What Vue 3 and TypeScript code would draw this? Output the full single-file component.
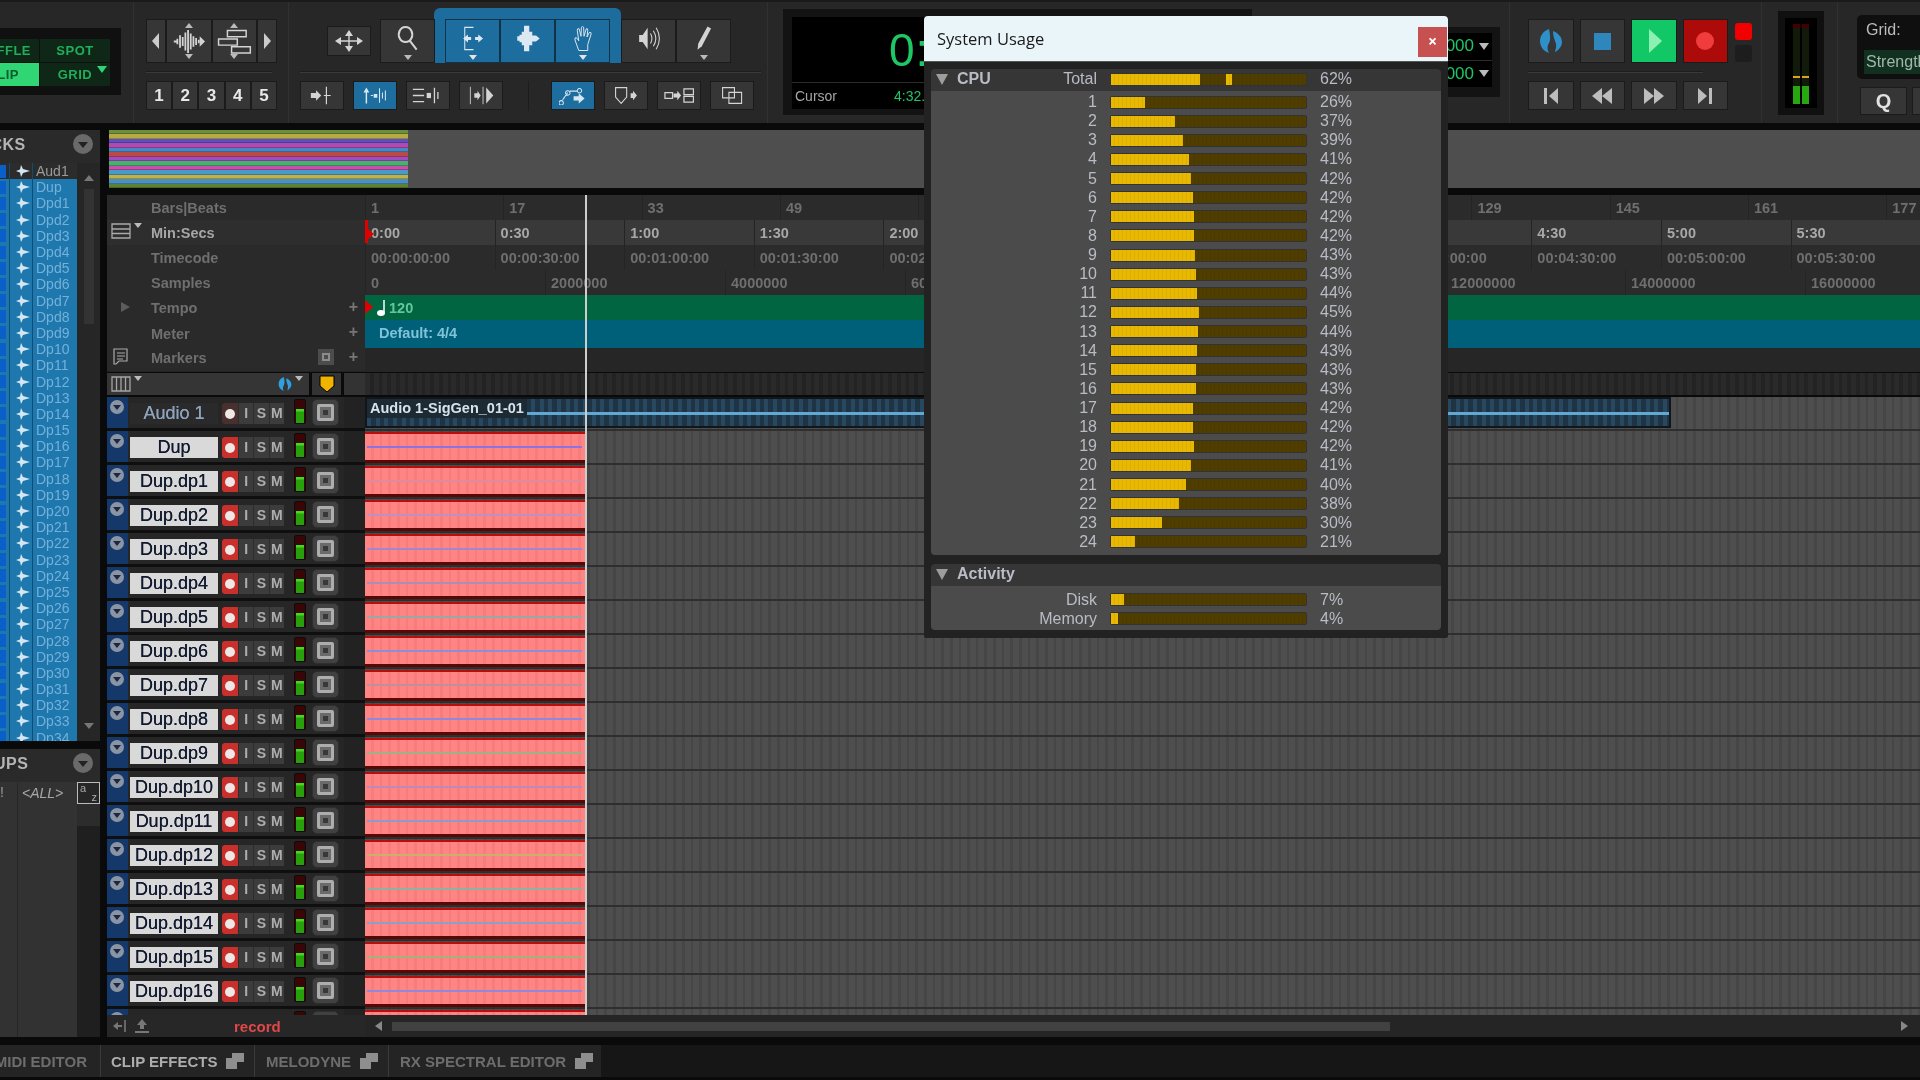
<script setup lang="ts">
import { h } from 'vue'
import type { FunctionalComponent } from 'vue'

type IconDef = { w: number; h: number; f?: string; s?: string; sw?: number }

// toolbar glyphs, fill path + stroke path
const icons: Record<string, IconDef> = {
  cross: { w: 30, h: 24, f: 'M1 12l6-4v8zM29 12l-6-4v8zM15 1l-4 6h8zM15 23l-4-6h8z', s: 'M5 12H25M15 5V19', sw: 1.4 },
  mag: { w: 30, h: 34, s: 'M12 2.500a8.500 9.500 0 1 0 .01 0M17.500 20l8.500 11', sw: 2.6 },
  trim: { w: 32, h: 34, f: 'M4 17l6-5v3h4v4h-4v3zM29 17l-6-5v3h-4v4h4v3z', s: 'M17 3H6V31H17', sw: 1.3 },
  grab: { w: 34, h: 36, f: 'M12 1h7v8h4v5h5l5 4-5 4h-5v5h-4v8h-7v-8H9v-4H6v-2H3v-6h3v-2h3V9h3z' },
  hand: { w: 28, h: 36, s: 'M9 34L4 20Q3 16 6 17L9 21 7 7Q7 4 9.500 5L12 15 12.500 3Q14 1 15.500 3L16 15 19 5Q21 4 21 7L20 16 23 10Q26 9 25.500 12L21 26V34Z', sw: 1.3 },
  speaker: { w: 32, h: 38, f: 'M3 14h5l7-10v30l-7-10H3z', s: 'M19 12q4 7 0 14M23 8q7 11 0 22M27 4q9 15 0 30', sw: 1.5 },
  pencil: { w: 26, h: 38, f: 'M19 2l5 3-13 25-6 5 1-9z' },
  wave: { w: 38, h: 28, f: 'M31 8l6 6-6 6z', s: 'M2 14h3M6 11v6M9 7v14M12 9v10M15 4v20M18 1v26M21 5v18M24 8v12M27 10v8M30 12v4', sw: 2 },
  clips: { w: 34, h: 24, s: 'M10 1.500h18v6H10zM1.500 9.500h18v6H1.500zM14 17h18v6H14z', sw: 1.4 },
  arrowIn: { w: 28, h: 22, f: 'M1 8h6V5l6 6-6 6v-3H1z', s: 'M19 1v20M16 11h8', sw: 1.4 },
  tabNudge: { w: 36, h: 26, f: 'M5 24V9H2l4-7 4 7H7v15zM16 11h5v5h-5z', s: 'M12 13h3M24 3v20M28 9v8M32 6v14', sw: 1.4 },
  tabLines: { w: 36, h: 22, f: 'M17 8h5v6h-5z', s: 'M1 4h13M1 11h13M1 18h13M26 2v18M30 7v8', sw: 1.5 },
  tabEnd: { w: 34, h: 24, f: 'M8 9h4v-3l4 6-4 6v-3H8zM23 2l9 10-9 10z', s: 'M3 1v22M19 1v22', sw: 1.1 },
  route: { w: 38, h: 26, f: 'M20 14h7v-4l8 7-8 7v-4h-7z', s: 'M3 20a3 3 0 1 0 .01 0M5 19L12 9M12 6.500a3 3 0 1 0 .01 0M15 7h10M28 3.500a3 3 0 1 0 .01 0', sw: 1.4 },
  marker: { w: 30, h: 24, f: 'M21 9h3V6l5 6-5 6v-3h-3z', s: 'M2 2h14v12l-7 8-7-8z', sw: 1.4 },
  link: { w: 32, h: 20, f: 'M10 8h4V5l4 5-4 5v-3h-4z', s: 'M1 7h8v6H1zM21 3h10v6H21zM21 11h10v6H21z', sw: 1.3 },
  frames: { w: 28, h: 24, s: 'M2 2h15v13H2zM10 8h16v14H10z', sw: 1.4 },
  prev: { w: 16, h: 18, f: 'M6 9l9-8v16zM1 1h3v16H1z' },
  rew: { w: 22, h: 18, f: 'M1 9l10-8v16zM11 9l10-8v16z' },
  ffw: { w: 22, h: 18, f: 'M1 1l10 8-10 8zM11 1l10 8-10 8z' },
  next: { w: 16, h: 18, f: 'M1 1l9 8-9 8zM12 1h3v16h-3z' },
  online: { w: 24, h: 26, f: 'M10 1C4 3 1 8 1 13s3 10 9 12c-2-3-2-7 0-10 2-3 1-9 0-14zM14 3c5 2 9 6 9 11 0 4-3 8-7 10 1-4 2-7 0-11-1-3-2-6-2-10z' },
  listIcon: { w: 20, h: 16, s: 'M1 1h18v14H1zM1 6h18M1 10.500h18', sw: 1.3 },
  colsIcon: { w: 20, h: 16, s: 'M1 1h18v14H1zM5.500 1v14M10 1v14M14.500 1v14', sw: 1.3 },
  comment: { w: 16, h: 18, s: 'M1 1h13v12H6l-3 3H1zM4 5h8M4 8h8M4 11h6', sw: 1.2 },
  tabStack: { w: 18, h: 16, f: 'M6 0h12v9H6zM0 5h11v11H0z' },
  inEnd: { w: 16, h: 14, f: 'M1 7l5-4v3h4v2H6v3z', s: 'M13 1v12', sw: 1.6 },
  upload: { w: 14, h: 14, f: 'M7 0l5 6H9v4H5V6H2zM0 12h14v2H0z' },
  spike: { w: 14, h: 14, f: 'M0 7l4-1.500L5 1l2 4 7 2-7 2-2 4-1-4.500z' },
}

const Icon: FunctionalComponent<{ name: string }> = (props) => {
  const ic = icons[props.name]
  return h('svg', { width: ic.w, height: ic.h, viewBox: `0 0 ${ic.w} ${ic.h}`, style: 'display:block' }, [
    ic.f ? h('path', { d: ic.f, fill: 'currentColor' }) : null,
    ic.s ? h('path', { d: ic.s, fill: 'none', stroke: 'currentColor', 'stroke-width': ic.sw ?? 1.4 }) : null,
  ])
}

const overviewBands = ['#6c8e3f', '#b8aa40', '#5b4fc4', '#b04ab0', '#4a86c2', '#b84a48', '#a24acb', '#4ab06e', '#c650aa', '#4a9ac8', '#c2b242', '#4a90c2', '#5d8234']

const listNames: string[] = ['Aud1', 'Dup']
for (let i = 1; i <= 34; i++) listNames.push(i < 10 ? `Dpd${i}` : `Dp${i}`)

const barTicks = Array.from({ length: 12 }, (_, i) => 1 + i * 16)
const minTicks = ['0:00', '0:30', '1:00', '1:30', '2:00', '2:30', '3:00', '3:30', '4:00', '4:30', '5:00', '5:30']
const tcTicks = minTicks.map((m) => {
  const [a, b] = m.split(':')
  return `00:0${a}:${b}:00`
})
const sampleTicks = Array.from({ length: 9 }, (_, i) => String(i * 2000000))

const laneColors = ['#a9b878', '#8f72e2', '#e08aa0', '#c090c0', '#a088d0', '#b08ab8', '#98a8a8', '#8a90d8', '#c09098', '#9088d8', '#a0b088', '#c088b8', '#8a9cc8', '#c8b070', '#90b0a0', '#8aa0c8', '#a8b078', '#9088d8']
const rows = ['Audio 1', 'Dup', ...Array.from({ length: 17 }, (_, i) => `Dup.dp${i + 1}`)]

const cpuRows: [string, number, string][] = [
  ['1', 34, '26%'], ['2', 64, '37%'], ['3', 72, '39%'], ['4', 78, '41%'], ['5', 80, '42%'], ['6', 82, '42%'],
  ['7', 83, '42%'], ['8', 83, '42%'], ['9', 84, '43%'], ['10', 85, '43%'], ['11', 86, '44%'], ['12', 88, '45%'],
  ['13', 87, '44%'], ['14', 86, '43%'], ['15', 85, '43%'], ['16', 85, '43%'], ['17', 82, '42%'], ['18', 82, '42%'],
  ['19', 83, '42%'], ['20', 80, '41%'], ['21', 75, '40%'], ['22', 68, '38%'], ['23', 51, '30%'], ['24', 24, '21%'],
]
const activityRows: [string, number, string][] = [['Disk', 13, '7%'], ['Memory', 7, '4%']]
</script>

<template>
  <div class="app">
    <header class="toolbar">
      <section class="tb-mode">
        <div class="modes">
          <div class="mode m-left"><span>SHUFFLE</span></div>
          <div class="mode">SPOT</div>
          <div class="mode m-left on"><span>SLIP</span></div>
          <div class="mode">GRID<i class="mode-tri"></i></div>
        </div>
      </section>

      <section class="tb-zoom">
        <div class="btn-group zoom-group">
          <div class="btn w19"><i class="tri-left"></i></div>
          <div class="btn w45 tall"><i class="mini up"></i><Icon name="wave" /><i class="mini"></i></div>
          <div class="btn w45 tall"><i class="mini up"></i><Icon name="clips" /><i class="mini"></i></div>
          <div class="btn w19"><i class="tri-right"></i></div>
        </div>
        <div class="hr"></div>
        <div class="btn-group num-group">
          <div v-for="n in 5" :key="n" class="btn num">{{ n }}</div>
        </div>
      </section>

      <section class="tb-tools">
        <div class="tools-top">
          <div class="btn cross-btn"><Icon name="cross" /></div>
          <div class="btn tool tool-zoom"><Icon name="mag" /><i class="mini low"></i></div>
          <div class="tool-tab">
            <div class="btn tool blue"><Icon name="trim" /><i class="mini low lite"></i></div>
            <div class="btn tool blue"><Icon name="grab" /></div>
            <div class="btn tool blue"><Icon name="hand" /><i class="mini low lite"></i></div>
          </div>
          <div class="btn tool"><Icon name="speaker" /></div>
          <div class="btn tool"><Icon name="pencil" /><i class="mini low"></i></div>
        </div>
        <div class="hr tools-hr"></div>
        <div class="tools-bottom">
          <div class="btn sm"><Icon name="arrowIn" /></div>
          <div class="btn sm active"><Icon name="tabNudge" /></div>
          <div class="btn sm"><Icon name="tabLines" /></div>
          <div class="btn sm"><Icon name="tabEnd" /></div>
          <div class="vsep"></div>
          <div class="btn sm active"><Icon name="route" /></div>
          <div class="btn sm"><Icon name="marker" /></div>
          <div class="btn sm"><Icon name="link" /></div>
          <div class="btn sm"><Icon name="frames" /></div>
        </div>
      </section>

      <section class="tb-counter">
        <div class="counter">
          <div class="counter-main">0:56.000</div>
          <div class="counter-line"></div>
          <div class="counter-sub"><span>Cursor</span><b>4:32.000</b></div>
        </div>
        <div class="selection">
          <div class="sel-row">000<i class="mode-tri gray"></i></div>
          <div class="sel-line"></div>
          <div class="sel-row">000<i class="mode-tri gray"></i></div>
        </div>
      </section>

      <section class="tb-transport">
        <div class="transport-top">
          <div class="btn trans"><span class="online"><Icon name="online" /></span></div>
          <div class="btn trans"><i class="stop"></i></div>
          <div class="btn trans play"><i class="play-tri"></i></div>
          <div class="btn trans rec"><i class="rec-dot"></i></div>
          <div class="leds"><i class="led red"></i><i class="led"></i></div>
        </div>
        <div class="hr trans-hr"></div>
        <div class="transport-bottom">
          <div class="btn trans2"><Icon name="prev" /></div>
          <div class="btn trans2"><Icon name="rew" /></div>
          <div class="btn trans2"><Icon name="ffw" /></div>
          <div class="btn trans2"><Icon name="next" /></div>
        </div>
      </section>

      <section class="tb-meter">
        <div class="master">
          <div class="master-in">
            <i class="mbar"></i><i class="mbar"></i>
          </div>
        </div>
      </section>

      <section class="tb-grid">
        <div class="grid-box">
          <div class="grid-label">Grid:</div>
          <div class="grid-val">Strength</div>
        </div>
        <div class="grid-btns">
          <div class="btn q">Q</div>
          <div class="btn q"></div>
        </div>
      </section>
    </header>

    <main class="main">
      <aside class="side">
        <div class="side-head"><span class="clip-end">TRACKS</span><i class="round-menu"></i></div>
        <div class="track-list">
          <div class="list-names">
            <div v-for="(n, i) in listNames" :key="n" class="list-row" :class="{ off: i === 0 }">
              <i class="list-box"></i>
              <span class="list-arrow"><Icon name="spike" /></span>
              <span class="list-name">{{ n }}</span>
            </div>
          </div>
          <div class="list-scroll">
            <i class="sc-up"></i>
            <div class="sc-thumb"></div>
            <i class="sc-down"></i>
          </div>
        </div>
        <div class="side-head groups"><span class="clip-end">GROUPS</span><i class="round-menu"></i></div>
        <div class="group-list">
          <div class="group-main"><span class="group-id">!</span><span class="group-all">&lt;ALL&gt;</span></div>
          <div class="group-col">
            <div class="az"><span>a</span><span>z</span></div>
            <div class="group-slot"></div>
          </div>
        </div>
      </aside>

      <div class="edit">
        <div class="overview">
          <div class="bands">
            <i v-for="(c, i) in overviewBands" :key="i" :style="{ background: c }"></i>
          </div>
        </div>

        <div class="ruler">
          <div class="r-row">
            <div class="r-label"><span class="r-text">Bars|Beats</span></div>
            <div class="r-cells bars">
              <span v-for="t in barTicks" :key="t">{{ t }}</span>
            </div>
          </div>
          <div class="r-row main-ruler">
            <div class="r-label">
              <span class="r-icon"><Icon name="listIcon" /><i class="mode-tri gray small"></i></span>
              <span class="r-text">Min:Secs</span>
            </div>
            <div class="r-cells mins">
              <span v-for="t in minTicks" :key="t">{{ t }}</span>
              <i class="start-flag"></i>
            </div>
          </div>
          <div class="r-row">
            <div class="r-label"><span class="r-text">Timecode</span></div>
            <div class="r-cells mins">
              <span v-for="t in tcTicks" :key="t">{{ t }}</span>
            </div>
          </div>
          <div class="r-row">
            <div class="r-label"><span class="r-text">Samples</span></div>
            <div class="r-cells samples">
              <span v-for="t in sampleTicks" :key="t">{{ t }}</span>
            </div>
          </div>
          <div class="r-row">
            <div class="r-label">
              <i class="r-tri"></i><span class="r-text">Tempo</span><b class="r-plus">+</b>
            </div>
            <div class="r-strip tempo">
              <i class="tempo-flag"></i>
              <svg width="12" height="18" viewBox="0 0 12 18"><path d="M8 1v12" stroke="#fff" stroke-width="1.500" /><ellipse cx="5" cy="14" rx="4" ry="3" fill="#fff" /></svg>
              <span>120</span>
            </div>
          </div>
          <div class="r-row">
            <div class="r-label"><span class="r-text">Meter</span><b class="r-plus">+</b></div>
            <div class="r-strip meter-strip"><span>Default: 4/4</span></div>
          </div>
          <div class="r-row">
            <div class="r-label">
              <span class="r-icon comment"><Icon name="comment" /></span>
              <span class="r-text">Markers</span>
              <i class="r-square"></i>
              <b class="r-plus">+</b>
            </div>
            <div class="r-blank"></div>
          </div>
        </div>

        <div class="lanes-head">
          <div class="lh-left">
            <div class="lh-main">
              <span class="lh-icon"><Icon name="colsIcon" /><i class="mode-tri gray small"></i></span>
              <span class="lh-online"><Icon name="online" /><i class="mode-tri gray small"></i></span>
            </div>
            <div class="lh-cell"><svg width="16" height="18" viewBox="0 0 16 18"><path d="M1 1h14v10l-7 6-7-6z" fill="#f0b400" stroke="#000" /></svg></div>
            <div class="lh-cell last"></div>
          </div>
          <div class="lh-right"></div>
        </div>

        <div class="tracks">
          <div v-for="(name, i) in rows" :key="name" class="track">
            <div class="t-head">
              <div class="t-fold"><i class="chev"></i></div>
              <div class="t-name" :class="{ dark: i === 0 }">{{ name }}</div>
              <div class="t-btns">
                <span class="t-rec" :class="{ armed: i > 0 }"><i></i></span>
                <span>I</span><span>S</span><span>M</span>
              </div>
              <div class="t-meter"><i></i></div>
              <div class="t-square"><i></i></div>
              <div class="t-slot"></div>
            </div>
            <div class="t-lane">
              <div v-if="i === 0" class="audio-clip">
                <span class="clip-name">Audio 1-SigGen_01-01</span>
              </div>
              <div v-else class="rec-clip"><i :style="{ background: laneColors[i] }"></i></div>
            </div>
          </div>
        </div>

        <div class="bottom">
          <div class="b-left">
            <span class="b-ic"><Icon name="inEnd" /></span>
            <span class="b-ic up"><Icon name="upload" /></span>
            <span class="b-record">record</span>
          </div>
          <div class="b-scroll">
            <i class="tri-left dim"></i>
            <div class="b-track"><div class="b-thumb"></div></div>
            <i class="tri-right dim"></i>
          </div>
        </div>

        <div class="playhead"></div>
      </div>
    </main>

    <footer class="tabs">
      <div class="tab first"><span>MIDI EDITOR</span></div>
      <div class="tab clip-tab"><span>CLIP EFFECTS</span><Icon name="tabStack" /></div>
      <div class="tab mel"><span>MELODYNE</span><Icon name="tabStack" /></div>
      <div class="tab rx"><span>RX SPECTRAL EDITOR</span><Icon name="tabStack" /></div>
    </footer>

    <div class="usage-window">
      <div class="win-title">
        <span>System Usage</span>
        <div class="win-close">×</div>
      </div>
      <div class="win-body">
        <div class="usage-sec">
          <div class="sec-head">
            <i class="sec-tri"></i><b class="sec-name">CPU</b>
            <span class="u-label total">Total</span>
            <div class="u-bar"><i :style="{ width: '89px' }"></i><i class="peak"></i></div>
            <span class="u-val">62%</span>
          </div>
          <div class="sec-body">
            <div v-for="r in cpuRows" :key="r[0]" class="u-row">
              <span class="u-label">{{ r[0] }}</span>
              <div class="u-bar"><i :style="{ width: r[1] + 'px' }"></i></div>
              <span class="u-val">{{ r[2] }}</span>
            </div>
          </div>
        </div>
        <div class="usage-sec">
          <div class="sec-head"><i class="sec-tri"></i><b class="sec-name">Activity</b></div>
          <div class="sec-body small">
            <div v-for="r in activityRows" :key="r[0]" class="u-row">
              <span class="u-label">{{ r[0] }}</span>
              <div class="u-bar"><i :style="{ width: r[1] + 'px' }"></i></div>
              <span class="u-val">{{ r[2] }}</span>
            </div>
          </div>
        </div>
      </div>
    </div>
  </div>
</template>

<style>
html,
body {
  margin: 0;
  background: #0a0a0a;
}
</style>

<style scoped>
.app {
  position: relative;
  width: 1920px;
  height: 1080px;
  overflow: hidden;
  background: #0a0a0a;
  display: flex;
  flex-direction: column;
  font-family: "Liberation Sans", Arial, sans-serif;
  color: #aaa;
  /* the source capture is a soft upscale */
  filter: blur(0.45px);
}

/* toolbar */
.toolbar {
  height: 123px;
  flex: none;
  display: flex;
  background: #272727;
  border-top: 2px solid #1a1a1a;
  box-sizing: border-box;
}
.toolbar section {
  box-sizing: border-box;
  height: 121px;
  border-right: 1px solid #313131;
  flex: none;
}
.btn {
  box-sizing: border-box;
  background: #363636;
  border: 1px solid #1b1b1b;
  color: #d4d4d4;
  display: flex;
  align-items: center;
  justify-content: center;
}
.hr {
  height: 1px;
  background: #3a3a3a;
  border-top: 1px solid #1d1d1d;
}
.mini {
  width: 0;
  height: 0;
  border-left: 4px solid transparent;
  border-right: 4px solid transparent;
  border-top: 5px solid #bbb;
}
.mini.up {
  border-top: 0;
  border-bottom: 5px solid #bbb;
}
.mini.low {
  position: absolute;
  bottom: 2px;
  left: 50%;
  margin-left: -4px;
}
.mini.lite {
  border-top-color: #e4e4e4;
}

.tb-mode {
  width: 134px;
  padding-top: 26px;
}
.modes {
  width: 121px;
  height: 67px;
  box-sizing: border-box;
  background: #101010;
  padding: 11px 11px 10px 0;
  display: grid;
  grid-template-columns: 39px 70px;
  grid-template-rows: 23px 23px;
  gap: 1px;
}
.mode {
  background: #0e2716;
  color: #1fae59;
  font-size: 13px;
  font-weight: 700;
  letter-spacing: 0.5px;
  display: flex;
  align-items: center;
  justify-content: center;
  position: relative;
  overflow: hidden;
}
.m-left {
  justify-content: flex-end;
  padding-right: 8px;
  white-space: nowrap;
}
.mode.on {
  background: #2fd673;
  color: #0e5a2a;
  padding-right: 20px;
}
.mode-tri {
  position: absolute;
  right: 3px;
  top: 3px;
  width: 0;
  height: 0;
  border-left: 5px solid transparent;
  border-right: 5px solid transparent;
  border-top: 7px solid #2fd673;
}
.mode-tri.gray {
  position: static;
  display: inline-block;
  margin-left: 5px;
  border-top-color: #bbb;
}
.mode-tri.small {
  border-left-width: 4px;
  border-right-width: 4px;
  border-top-width: 5px;
  margin: 0 0 0 3px;
}

.tb-zoom {
  width: 155px;
  padding: 17px 12px 0;
}
.btn-group {
  display: flex;
  width: 131px;
}
.zoom-group {
  height: 44px;
}
.w19 {
  width: 20px;
}
.w45 {
  width: 46px;
}
.tall {
  flex-direction: column;
  justify-content: space-between;
  padding: 3px 0;
}
.tall :deep(svg) {
  height: 25px;
  width: auto;
}
.tri-left,
.tri-right {
  width: 0;
  height: 0;
  border-top: 8px solid transparent;
  border-bottom: 8px solid transparent;
}
.tri-left {
  border-right: 7px solid #ccc;
}
.tri-right {
  border-left: 7px solid #ccc;
}
.tri-left.dim,
.tri-right.dim {
  border-top-width: 5px;
  border-bottom-width: 5px;
  border-left-color: #888;
  border-right-color: #888;
}
.zoom-group + .hr {
  margin: 8px 4px 8px 0;
}
.num-group {
  height: 29px;
}
.num {
  flex: 1;
  font-size: 17px;
  font-weight: 700;
  color: #e8e8e8;
}

.tb-tools {
  width: 479px;
  padding-top: 6px;
}
.tools-top {
  display: flex;
  align-items: flex-end;
  height: 55px;
  padding-left: 38px;
}
.cross-btn {
  width: 44px;
  height: 30px;
  margin: 0 0 7px;
}
.tool {
  position: relative;
  width: 55px;
  height: 44px;
  padding-bottom: 6px;
}
.tool :deep(svg) {
  height: 27px;
  width: auto;
}
.tool-zoom {
  margin-left: 9px;
}
.tool-tab {
  width: 187px;
  height: 55px;
  box-sizing: border-box;
  background: #1c6d9e;
  border-radius: 6px 6px 0 0;
  padding: 11px 11px 0;
  display: flex;
  margin-left: -1px;
}
.tool-tab .tool {
  height: 44px;
  width: 55px;
  flex: 1;
}
.btn.blue {
  background: #1d6d9f;
  border-color: #123247;
  color: #dce9f2;
}
.tools-hr {
  margin: 8px 6px 8px 11px;
}
.tools-bottom {
  display: flex;
  gap: 9px;
  padding-left: 11px;
  height: 29px;
}
.sm {
  width: 44px;
  height: 29px;
}
.sm :deep(svg) {
  height: 19px;
  width: auto;
}
.btn.active {
  background: #1d6d9f;
  border-color: #1b1b1b;
  color: #d6e7f2;
}
.vsep {
  width: 1px;
  background: #1c1c1c;
  margin: 0 13px 0 16px;
  height: 30px;
}

.tb-counter {
  width: 742px;
  display: flex;
  align-items: flex-start;
  padding: 7px 0 0 15px;
  gap: 18px;
}
.counter {
  width: 469px;
  height: 106px;
  box-sizing: border-box;
  background: #131313;
  padding: 8px 9px;
  position: relative;
}
.counter-main {
  height: 65px;
  background: #000;
  color: #1ec765;
  font-size: 46px;
  line-height: 66px;
  padding-left: 97px;
  letter-spacing: 1px;
  white-space: nowrap;
}
.counter-line {
  height: 1px;
  background: #2c2c2c;
}
.counter-sub {
  height: 26px;
  background: #000;
  display: flex;
  align-items: center;
  font-size: 14px;
  padding-left: 3px;
  color: #a6a6a6;
}
.counter-sub b {
  font-weight: 400;
  color: #1ec765;
  margin-left: 57px;
}
.selection {
  width: 230px;
  height: 70px;
  margin-top: 18px;
  background: #131313;
  box-sizing: border-box;
  padding: 6px 8px 10px;
  display: flex;
  flex-direction: column;
}
.sel-row {
  flex: 1;
  background: #000;
  color: #1ec765;
  font-size: 17px;
  display: flex;
  align-items: center;
  justify-content: flex-end;
  padding-right: 3px;
}
.sel-line {
  height: 1px;
  background: #2c2c2c;
}

.tb-transport {
  width: 252px;
  padding: 17px 0 0 18px;
}
.transport-top,
.transport-bottom {
  display: flex;
  gap: 6px;
}
.trans {
  width: 45.5px;
  height: 44px;
}
.online {
  color: #2f8fc9;
  display: block;
}
.stop {
  width: 17px;
  height: 17px;
  background: #2f86bd;
}
.btn.play {
  background: #12c866;
  border-color: #1b1b1b;
}
.play-tri {
  width: 0;
  height: 0;
  border-top: 12px solid transparent;
  border-bottom: 12px solid transparent;
  border-left: 13px solid #8cf0b4;
  margin-left: 3px;
}
.btn.rec {
  background: #ad0a0a;
}
.rec-dot {
  width: 18px;
  height: 18px;
  border-radius: 50%;
  background: #f03c3c;
}
.leds {
  display: flex;
  flex-direction: column;
  gap: 5px;
  padding-top: 4px;
  margin-left: 1px;
}
.led {
  width: 17px;
  height: 17px;
  border-radius: 3px;
  background: #1d1d1d;
}
.led.red {
  background: #f20000;
}
.trans-hr {
  margin: 8px 58px 8px 0;
}
.trans2 {
  width: 45.5px;
  height: 29px;
  color: #bdbdbd;
}

.tb-meter {
  width: 76px;
  padding: 9px 0 0 16px;
}
.master {
  width: 46px;
  height: 104px;
  box-sizing: border-box;
  background: #101010;
  padding: 7px;
}
.master-in {
  height: 90px;
  background: #000;
  box-sizing: border-box;
  padding: 6px 8px 4px;
  display: flex;
  gap: 2px;
}
.mbar {
  flex: 1;
  background: linear-gradient(to bottom, #400 0 4px, #121a0a 4px 52px, #e0a020 52px 54px, #121a0a 54px 62px, #28a810 62px);
}

.tb-grid {
  width: 82px;
  border-right: 0 !important;
  padding: 13px 0 0 19px;
}
.grid-box {
  width: 70px;
  height: 64px;
  box-sizing: border-box;
  background: #0f0f0f;
  border-radius: 5px 0 0 5px;
  padding: 5px 0 0 9px;
  overflow: hidden;
  white-space: nowrap;
  font-size: 16px;
}
.grid-label {
  color: #bbb;
  height: 30px;
  line-height: 20px;
}
.grid-val {
  background: #123020;
  color: #9fb8a8;
  margin-left: -2px;
  padding: 3px 0 3px 2px;
}
.grid-btns {
  display: flex;
  gap: 5px;
  margin: 8px 0 0 3px;
  width: 90px;
}
.q {
  flex: none;
  width: 47px;
  height: 28px;
  font-size: 20px;
  font-weight: 700;
  color: #e2e2e2;
}

/* main */
.main {
  flex: none;
  height: 907px;
  margin-top: 7px;
  display: flex;
  gap: 7px;
}
.side {
  width: 100px;
  flex: none;
  display: flex;
  flex-direction: column;
}
.side-head {
  height: 33px;
  flex: none;
  box-sizing: border-box;
  padding-bottom: 3px;
  background: #2a2a2a;
  display: flex;
  align-items: center;
  position: relative;
}
.side-head .clip-end {
  flex: none;
  font-size: 16px;
  font-weight: 700;
  color: #b5b5b5;
  letter-spacing: 0.5px;
  white-space: nowrap;
  margin-left: -44px;
  width: 68px;
  text-align: right;
}
.round-menu {
  position: absolute;
  right: 7px;
  top: 4px;
  width: 20px;
  height: 20px;
  border-radius: 50%;
  background: #6a6a6a;
}
.round-menu::after {
  content: "";
  position: absolute;
  left: 5px;
  top: 8px;
  border-left: 5px solid transparent;
  border-right: 5px solid transparent;
  border-top: 6px solid #222;
}
.track-list {
  height: 578px;
  flex: none;
  display: flex;
  background: #202020;
}
.list-names {
  width: 77px;
  overflow: hidden;
  background: #1e78ae;
}
.list-row {
  height: 16.2px;
  display: flex;
  align-items: center;
  font-size: 14px;
  line-height: 16px;
  color: #74b0d8;
  background: #1e78ae;
}
.list-row.off {
  background: #2c2c2c;
  color: #9a9a9a;
}
.list-box {
  width: 6px;
  height: 13px;
  background: #0860c8;
  flex: none;
}
.list-arrow {
  width: 24px;
  margin-left: 3px;
  padding-left: 6px;
  box-sizing: border-box;
  color: #d3e6f2;
  height: 100%;
  display: flex;
  align-items: center;
  flex: none;
  border-left: 1px solid #0e4d75;
  border-right: 1px solid #0e4d75;
}
.list-name {
  margin-left: 3px;
}
.list-scroll {
  flex: 1;
  background: #262626;
  display: flex;
  flex-direction: column;
  align-items: center;
  padding: 12px 0;
  box-sizing: border-box;
}
.sc-up,
.sc-down {
  width: 0;
  height: 0;
  border-left: 5px solid transparent;
  border-right: 5px solid transparent;
  border-bottom: 6px solid #777;
}
.sc-down {
  border-bottom: 0;
  border-top: 6px solid #777;
  margin-top: auto;
}
.sc-thumb {
  width: 10px;
  height: 135px;
  margin-top: 8px;
  background: #333;
}
.side-head.groups {
  margin-top: 8px;
}
.group-list {
  flex: 1;
  display: flex;
  background: #323232;
  font-size: 14px;
}
.group-main {
  flex: 1;
  padding-top: 1px;
  display: flex;
}
.group-id {
  width: 18px;
  border-right: 1px solid #262626;
  box-sizing: border-box;
  color: #999;
  line-height: 18px;
}
.group-all {
  margin-left: 4px;
  font-style: italic;
  color: #a8a8a8;
  line-height: 20px;
}
.group-col {
  width: 23px;
  background: #1f1f1f;
  display: flex;
  flex-direction: column;
}
.az {
  box-sizing: border-box;
  height: 22px;
  border: 1px solid #bbb;
  background: #262626;
  color: #aaa;
  font-size: 11px;
  line-height: 9px;
  display: flex;
  flex-direction: column;
  padding: 1px 2px;
}
.az span:last-child {
  text-align: right;
}
.group-slot {
  height: 22px;
  background: #2c2c2c;
}

/* edit window */
.edit {
  position: relative;
  flex: 1;
  display: flex;
  flex-direction: column;
  min-width: 0;
}
.overview {
  height: 58px;
  flex: none;
  margin-left: 2px;
  background: #4e4e4e;
}
.bands {
  width: 299px;
  height: 100%;
  display: flex;
  flex-direction: column;
}
.bands i {
  flex: 1;
  border-bottom: 1px solid rgba(0, 0, 0, 0.22);
}
.ruler {
  margin-top: 7px;
  flex: none;
}
.r-row {
  display: grid;
  grid-template-columns: 258px 1fr;
  height: 25px;
  font-size: 14.5px;
  font-weight: 700;
  line-height: 26px;
  color: #6f6f6f;
}
.r-label {
  position: relative;
  background: #2a2a2a;
  border-bottom: 1px solid #232323;
  display: flex;
  align-items: center;
  padding-left: 44px;
  box-sizing: border-box;
}
.r-text {
  white-space: nowrap;
}
.main-ruler {
  color: #a6a6a6;
}
.main-ruler .r-label {
  background: #2e2e2e;
}
.r-icon {
  position: absolute;
  left: 4px;
  top: 3px;
  display: flex;
  color: #aaa;
}
.r-icon.comment {
  left: 6px;
}
.r-tri {
  position: absolute;
  left: 14px;
  top: 7px;
  border-top: 5.500px solid transparent;
  border-bottom: 5.500px solid transparent;
  border-left: 9px solid #5c5c5c;
}
.r-plus {
  position: absolute;
  right: 7px;
  top: -1px;
  font-size: 16px;
  color: #777;
}
.r-square {
  position: absolute;
  left: 211px;
  top: 4px;
  width: 16px;
  height: 16px;
  box-sizing: border-box;
  background: #4c4c4c;
  display: flex;
  align-items: center;
  justify-content: center;
}
.r-square::after {
  content: "";
  width: 8px;
  height: 8px;
  box-sizing: border-box;
  border: 2px solid #8c8c8c;
}
.r-cells {
  display: flex;
  background: #2b2b2b;
  border-bottom: 1px solid #232323;
  overflow: hidden;
  position: relative;
  white-space: nowrap;
}
.r-cells span {
  flex: none;
  padding-left: 5px;
  box-sizing: border-box;
  border-left: 1px solid #242424;
}
.bars span {
  width: 138.3px;
}
.mins span {
  width: 129.6px;
}
.samples span {
  width: 180px;
}
.main-ruler .r-cells {
  background: #393939;
  color: #a8a8a8;
  border-color: #222;
}
.start-flag {
  position: absolute;
  left: 0;
  top: 0;
  width: 3px;
  height: 23px;
  background: #e00000;
}
.start-flag::after {
  content: "";
  position: absolute;
  left: 3px;
  top: 9px;
  border-top: 5px solid transparent;
  border-bottom: 5px solid transparent;
  border-left: 6px solid #e00000;
}
.r-strip {
  display: flex;
  align-items: center;
  position: relative;
  font-size: 14.5px;
}
.tempo {
  background: #006540;
  color: #63c79c;
  padding-left: 11px;
  border-bottom: 1px solid #1f3a2c;
  box-sizing: border-box;
}
.tempo span {
  margin-left: 1px;
}
.tempo-flag {
  position: absolute;
  left: 0;
  top: 5px;
  border-top: 7px solid transparent;
  border-bottom: 7px solid transparent;
  border-left: 8px solid #e00000;
}
.meter-strip {
  background: #005f79;
  color: #7fc3d8;
  padding: 0 0 2px 14px;
  box-sizing: border-box;
}
.r-blank {
  background: #262626;
}
.lanes-head {
  margin-top: 3px;
  height: 22px;
  flex: none;
  display: grid;
  grid-template-columns: 258px 1fr;
}
.lh-left {
  display: flex;
  gap: 3px;
}
.lh-main {
  width: 202px;
  background: #353535;
  display: flex;
  justify-content: space-between;
  align-items: center;
  padding: 0 6px 0 4px;
  box-sizing: border-box;
  color: #a5a5a5;
}
.lh-icon {
  display: flex;
  align-items: flex-start;
}
.lh-online {
  display: flex;
  align-items: flex-start;
  color: #2f9fe0;
}
.lh-online :deep(svg) {
  width: 14px;
  height: 16px;
}
.lh-cell {
  width: 29px;
  background: #333;
  display: flex;
  align-items: center;
  justify-content: center;
}
.lh-cell.last {
  width: 21px;
}
.lh-right {
  background: repeating-linear-gradient(to right, #2a2a2a 0 5px, #232323 5px 8.64px);
}
.tracks {
  margin-top: 2px;
  height: 618px;
  flex: none;
  overflow: hidden;
}
.track {
  height: 34px;
  display: grid;
  grid-template-columns: 258px 1fr;
  background: #0f0f0f;
}
.t-head {
  height: 31px;
  display: flex;
  background: #262626;
}
.t-fold {
  width: 21px;
  flex: none;
  background: #14386a;
  position: relative;
}
.chev {
  position: absolute;
  left: 3px;
  top: 3px;
  width: 14px;
  height: 14px;
  border-radius: 50%;
  background: #8b94a4;
}
.chev::after {
  content: "";
  position: absolute;
  left: 3px;
  top: 5px;
  border-left: 4px solid transparent;
  border-right: 4px solid transparent;
  border-top: 5px solid #1c2840;
}
.t-name {
  width: 88px;
  height: 21px;
  margin: 6px 0 0 2px;
  background: #d9d9d9;
  color: #10192e;
  font-size: 18px;
  line-height: 20px;
  text-align: center;
  white-space: nowrap;
  flex: none;
  overflow: hidden;
  text-shadow: 0 0 0.6px #10192e;
}
.t-name.dark {
  background: #2a2a2a;
  color: #8ea4bd;
  text-shadow: 0 0 0.6px #8ea4bd;
}
.t-btns {
  display: flex;
  width: 62px;
  height: 21px;
  margin: 6px 0 0 4px;
  flex: none;
  font-size: 14px;
  font-weight: 700;
  color: #aeaeae;
  line-height: 20px;
  text-align: center;
}
.t-btns span {
  flex: 1;
  background: #3c3c3c;
  border-left: 1px solid #2c2c2c;
}
.t-btns .t-rec {
  background: #4a2f2f;
  flex: none;
  width: 16px;
  border: 0;
  display: flex;
  align-items: center;
  justify-content: center;
  border-radius: 3px 0 0 3px;
}
.t-rec i {
  width: 10px;
  height: 10px;
  border-radius: 50%;
  background: #efe6e6;
}
.t-btns .t-rec.armed {
  background: #c9302c;
}
.t-meter {
  width: 12px;
  height: 25px;
  margin: 2px 0 0 10px;
  flex: none;
  background: #3a0505;
  border: 1px solid #0c0c0c;
  box-sizing: border-box;
  border-radius: 2px;
  position: relative;
}
.t-meter i {
  position: absolute;
  left: 1px;
  right: 1px;
  bottom: 0;
  height: 14px;
  background: linear-gradient(to bottom, #44d820 0 2px, #27a00c 3px);
}
.t-square {
  width: 27px;
  height: 27px;
  margin: 2px 0 0 6px;
  flex: none;
  box-sizing: border-box;
  border-radius: 5px;
  background: #414141;
  border: 1px solid #2e2e2e;
  display: flex;
  align-items: center;
  justify-content: center;
}
.t-square i {
  width: 17px;
  height: 17px;
  box-sizing: border-box;
  background: #6a6a6a;
  border: 3px solid #adadad;
  border-radius: 2px;
  display: flex;
  align-items: center;
  justify-content: center;
}
.t-square i::after {
  content: "";
  width: 5px;
  height: 5px;
  background: #383838;
}
.t-slot {
  flex: 1;
  margin-left: 5px;
  background: #222;
}
.t-lane {
  height: 34px;
  box-sizing: border-box;
  background: repeating-linear-gradient(to right, #4e4e4e 0 6px, #464646 6px 8.64px);
  border-bottom: 2px solid #2e2e2e;
  position: relative;
}
.audio-clip {
  width: 1306px;
  height: 31px;
  box-sizing: border-box;
  border: 2px solid #10161c;
  background: repeating-linear-gradient(to right, #27485f 0 4px, #1e3444 4px 8.64px);
  position: relative;
}
.audio-clip::after {
  content: "";
  position: absolute;
  left: 0;
  right: 0;
  top: 13px;
  height: 3px;
  background: #62a8d2;
}
.clip-name {
  position: absolute;
  z-index: 1;
  left: 0;
  top: 0;
  padding: 0 3px;
  background: #1c2a34;
  color: #d7e2ea;
  font-size: 14.5px;
  font-weight: 700;
  line-height: 19px;
  white-space: nowrap;
}
.rec-clip {
  width: 220px;
  height: 31px;
  box-sizing: border-box;
  margin-top: 1px;
  border-top: 2px solid #b40e0e;
  border-bottom: 3px solid #5c0606;
  background: repeating-linear-gradient(to right, #ff8484 0 6px, #f77c7c 6px 8.64px);
  display: flex;
  align-items: center;
  padding: 0 3px 0 2px;
}
.rec-clip i {
  display: block;
  flex: 1;
  height: 1.500px;
}
.bottom {
  height: 22px;
  flex: none;
  display: grid;
  grid-template-columns: 258px 1fr;
  background: #272727;
}
.b-left {
  display: flex;
  align-items: center;
  padding-left: 5px;
  color: #777;
}
.b-ic {
  display: flex;
  width: 18px;
}
.b-ic.up {
  margin-left: 5px;
}
.b-record {
  margin-left: 81px;
  color: #e04848;
  font-size: 15px;
  font-weight: 700;
}
.b-scroll {
  display: flex;
  align-items: center;
  padding: 0 12px 0 10px;
  gap: 10px;
  background: #252525;
}
.b-track {
  flex: 1;
}
.b-thumb {
  width: 998px;
  height: 9px;
  background: #414141;
}
.playhead {
  position: absolute;
  left: 478px;
  top: 65px;
  width: 2px;
  height: 820px;
  background: #cdcdcd;
}

/* tabs */
.tabs {
  margin-top: 8px;
  height: 32px;
  flex: none;
  display: flex;
  background: #161616;
  font-size: 15px;
  font-weight: 700;
  color: #6d6d6d;
}
.tab {
  height: 100%;
  box-sizing: border-box;
  background: #242424;
  border-right: 1px solid #3a3a3a;
  display: flex;
  align-items: center;
  gap: 9px;
  white-space: nowrap;
  overflow: hidden;
  flex: none;
}
.first {
  width: 101px;
  justify-content: flex-end;
  padding-right: 13px;
}
.clip-tab {
  width: 154px;
  padding-left: 10px;
  color: #adadad;
}
.mel {
  width: 134px;
  padding-left: 11px;
}
.rx {
  width: 212px;
  padding-left: 11px;
  border-right: 0;
}
.tab :deep(svg) {
  flex: none;
  color: #8e8e8e;
}

/* floating usage window */
.usage-window {
  position: absolute;
  left: 924px;
  top: 16px;
  width: 524px;
  height: 622px;
  border-radius: 4px 4px 2px 2px;
  overflow: hidden;
  display: flex;
  flex-direction: column;
}
.win-title {
  height: 46px;
  flex: none;
  background: #eaf5fa;
  color: #1a1a1a;
  font-family: "Open Sans", "Noto Sans", sans-serif;
  font-size: 16.5px;
  display: flex;
  align-items: center;
  padding-left: 13px;
  position: relative;
  border-bottom: 1px solid #555;
  box-sizing: border-box;
}
.win-close {
  position: absolute;
  right: 1px;
  top: 11px;
  width: 29px;
  height: 30px;
  background: #c75050;
  color: #fff;
  font-size: 16px;
  font-weight: 700;
  text-align: center;
  line-height: 28px;
}
.win-body {
  flex: 1;
  background: #222;
  padding: 7px 7px 0;
  display: flex;
  flex-direction: column;
  gap: 9px;
}
.usage-sec {
  border-radius: 4px;
  overflow: hidden;
}
.sec-head {
  height: 22px;
  box-sizing: border-box;
  padding: 0 0 2px 5px;
  background: #363636;
  display: flex;
  align-items: center;
  font-size: 16px;
  color: #b8bcc4;
}
.sec-tri {
  width: 0;
  height: 0;
  border-left: 6px solid transparent;
  border-right: 6px solid transparent;
  border-top: 11px solid #9d9d9d;
  flex: none;
}
.sec-name {
  margin-left: 9px;
  width: 100px;
  flex: none;
}
.sec-body {
  background: #4b4b4b;
  height: 464px;
  box-sizing: border-box;
  padding-top: 1.500px;
}
.sec-body.small {
  height: 44px;
  padding-top: 4px;
}
.u-row {
  height: 19.13px;
  display: flex;
  align-items: center;
  font-size: 16px;
  color: #b8bcc4;
}
.u-label {
  width: 166px;
  flex: none;
  text-align: right;
  white-space: nowrap;
}
.u-label.total {
  width: 40px;
}
.u-bar {
  position: relative;
  width: 197px;
  height: 13px;
  margin-left: 13px;
  flex: none;
  box-sizing: border-box;
  background: repeating-linear-gradient(to right, #503e00 0 3px, #4a3a00 3px 4px);
  border: 1px solid #333;
  border-radius: 2px;
}
.u-bar i {
  display: block;
  height: 100%;
  background: repeating-linear-gradient(to right, #e8b900 0 3px, #dcae00 3px 4px);
}
.u-bar i.peak {
  position: absolute;
  top: 0;
  left: 115px;
  width: 6px;
}
.u-val {
  margin-left: 13px;
  white-space: nowrap;
}
</style>
